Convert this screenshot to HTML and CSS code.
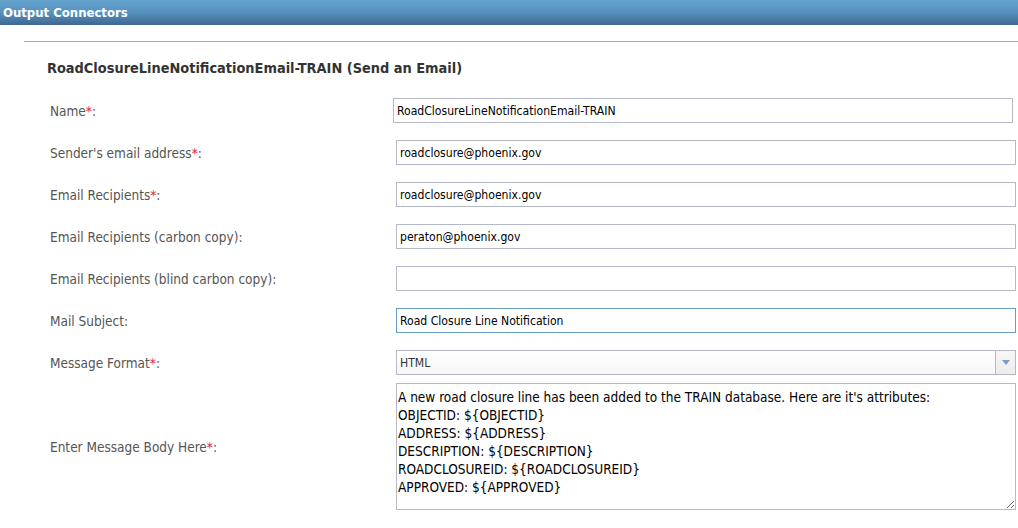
FILE: index.html
```html
<!DOCTYPE html>
<html lang="en">
<head>
    <meta charset="UTF-8">
    <title>Output Connectors</title>
    <link rel="stylesheet" href="styles.css">
</head>
<body>
    <div class="bar">Output Connectors</div>
    <div class="panel">
        <h2 class="title">RoadClosureLineNotificationEmail-TRAIN (Send an Email)</h2>
        <form class="fields">
            <div class="row">
                <label>Name<span class="req">*</span>:</label>
                <input class="text shifted" type="text" value="RoadClosureLineNotificationEmail-TRAIN">
            </div>
            <div class="row">
                <label>Sender's email address<span class="req">*</span>:</label>
                <input class="text" type="text" value="roadclosure@phoenix.gov">
            </div>
            <div class="row">
                <label>Email Recipients<span class="req">*</span>:</label>
                <input class="text" type="text" value="roadclosure@phoenix.gov">
            </div>
            <div class="row">
                <label>Email Recipients (carbon copy):</label>
                <input class="text" type="text" value="peraton@phoenix.gov">
            </div>
            <div class="row">
                <label>Email Recipients (blind carbon copy):</label>
                <input class="text" type="text" value="">
            </div>
            <div class="row">
                <label>Mail Subject:</label>
                <input class="text focused" type="text" value="Road Closure Line Notification">
            </div>
            <div class="row">
                <label>Message Format<span class="req">*</span>:</label>
                <div class="combo">
                    <span class="combo-value">HTML</span>
                    <span class="combo-trigger"><i></i></span>
                </div>
            </div>
            <div class="row tight">
                <label>Enter Message Body Here<span class="req">*</span>:</label>
                <textarea class="body">A new road closure line has been added to the TRAIN database. Here are it's attributes:
OBJECTID: ${OBJECTID}
ADDRESS: ${ADDRESS}
DESCRIPTION: ${DESCRIPTION}
ROADCLOSUREID: ${ROADCLOSUREID}
APPROVED: ${APPROVED}</textarea>
            </div>
        </form>
    </div>
</body>
</html>
```

FILE: styles.css
```css
body {
    margin: 0;
    font-family: "DejaVu Sans Condensed", "Liberation Sans", sans-serif;
    background-color: #fff;
    overflow: hidden;
}
.bar {
    height: 25px;
    line-height: 25px;
    padding-left: 3px;
    color: #fff;
    font-size: 13px;
    font-weight: bold;
    background: linear-gradient(to bottom, #64a3cd 0%, #5791bd 50%, #3f6792 100%);
}
.panel {
    margin: 16px 0 0 24px;
    padding: 0 2px 0 23px;
    border-top: 1px solid #aaa;
}
.title {
    margin: 18px 0 21px;
    font-size: 14.4px;
    line-height: 17px;
    color: #333;
}
.fields {
    display: flex;
    flex-direction: column;
    gap: 17px;
    padding-left: 3px;
}
.row {
    display: flex;
    align-items: center;
}
.row.tight {
    margin-top: -9px;
}
.row label {
    width: 346px;
    flex: none;
    font-size: 13.5px;
    color: #555;
}
.req {
    color: #e8203c;
}
.text,
.combo,
.body {
    box-sizing: border-box;
    flex: 1;
    margin: 0;
    border: 1px solid #b5b8c8;
    background: #fff;
    font-family: "DejaVu Sans Condensed", "Liberation Sans", sans-serif;
    color: #000;
}
.text {
    height: 25px;
    padding: 0 3px;
    font-size: 12.1px;
    outline: none;
}
.text.shifted {
    margin-left: -3px;
    margin-right: 3px;
}
.text.focused {
    border-color: #6a9bc2;
}
.combo {
    height: 25px;
    display: flex;
    align-items: center;
    background: linear-gradient(to bottom, #fff, #f6f6f6);
}
.combo-value {
    flex: 1;
    padding-left: 3px;
    font-size: 12.1px;
    color: #333;
}
.combo-trigger {
    width: 19px;
    height: 100%;
    display: flex;
    align-items: center;
    justify-content: center;
    border-left: 1px solid #b5b8c8;
    background: linear-gradient(to bottom, #f7f7f7, #ececec);
}
.combo-trigger i {
    width: 0;
    height: 0;
    border-left: 4px solid transparent;
    border-right: 4px solid transparent;
    border-top: 5px solid #7b9cc4;
}
.body {
    height: 127px;
    padding: 4px 1px 2px;
    font-size: 13.5px;
    line-height: 18px;
    resize: vertical;
    outline: none;
}
```
